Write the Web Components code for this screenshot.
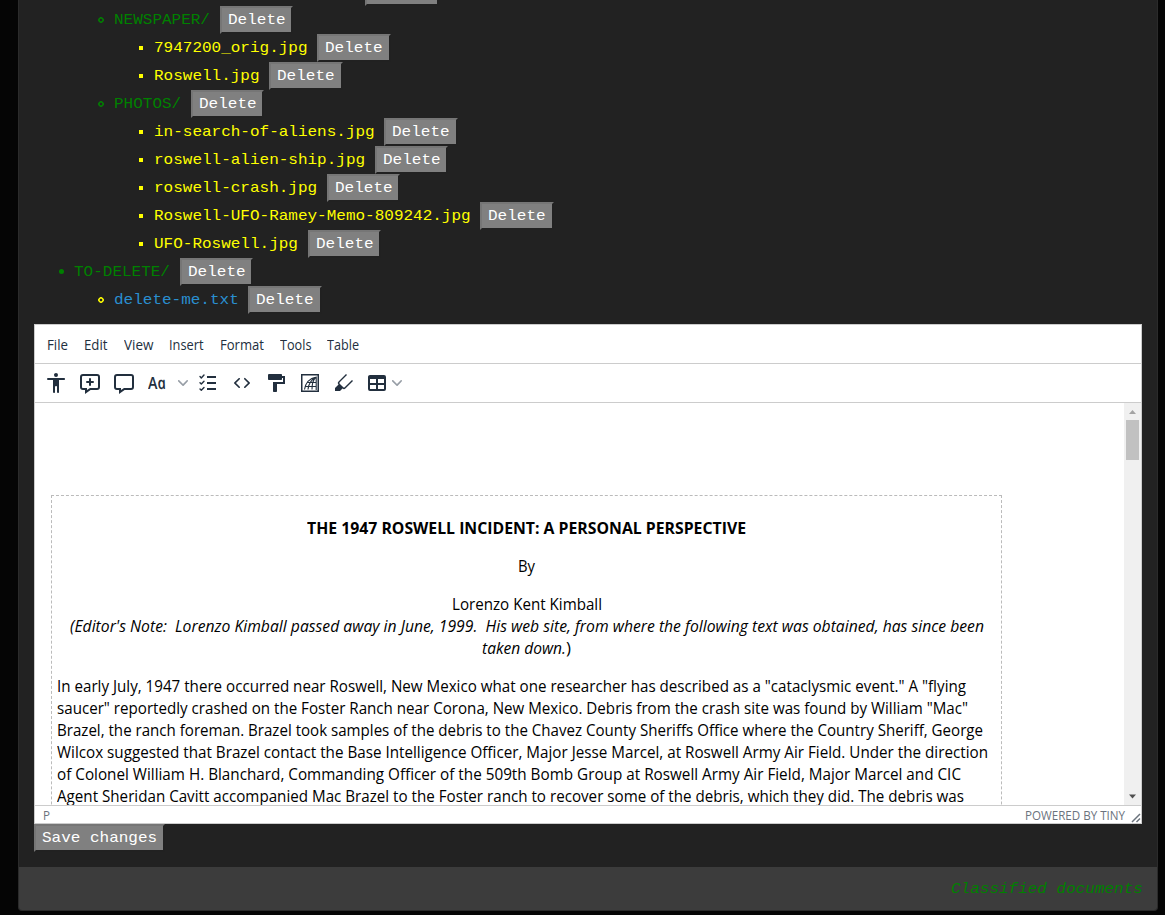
<!DOCTYPE html>
<html lang="en">
<head>
<meta charset="utf-8">
<title>Classified documents</title>
<style>
html{background:#050505}
body{margin:0;height:915px;overflow:hidden;background:#050505;font:16px/22px "Liberation Mono","Courier New",monospace}
</style>
</head>
<body>
<admin-page></admin-page>
<script>
const define = (name, html, init) => customElements.define(name, class extends HTMLElement {
  constructor() {
    super();
    this.attachShadow({ mode: 'open' }).innerHTML = html;
  }
  connectedCallback() { if (init) init.call(this, this.shadowRoot); }
});

/* One line of text, condensed so that it fills the width given in "w". */
define('fit-text', `<style>:host{display:inline-block;white-space:pre;vertical-align:top;text-align:left}span{display:inline-block;transform-origin:0 50%}</style><span><slot></slot></span>`,
function (root) {
  const w = parseFloat(this.getAttribute('w'));
  const span = root.querySelector('span');
  const natural = span.offsetWidth && span.getBoundingClientRect().width;
  if (natural) span.style.transform = 'scaleX(' + (w / natural) + ')';
  this.style.width = w + 'px';
});

/* Typewriter text: low letters on a wide 9.6px pitch. */
define('mono-text', `<style>
:host{display:inline-block;white-space:pre;vertical-align:top;text-align:left;font-size:14.4px}
span{display:inline-block;transform:scaleX(1.1111);transform-origin:0 50%}
</style><span><slot></slot></span>`,
function (root) {
  const span = root.querySelector('span');
  this.style.width = span.getBoundingClientRect().width + 'px';
});

define('bevel-button', `<style>
:host{display:inline-block;vertical-align:top}
button{display:block;box-sizing:border-box;height:28px;margin:0;padding:0 6px;border:2px solid;border-color:#767676 #212121 #212121 #767676;background:#808080;color:#fff;font:16px/23px "Liberation Mono","Courier New",monospace;white-space:pre}
</style><button><mono-text><slot></slot></mono-text></button>`);

define('file-row', `<style>
:host{display:flex;height:28px;color:#ff0}
:host([kind=dir]){color:green}
.lead{display:flex;align-items:center;justify-content:flex-end;flex:none;box-sizing:border-box;padding-right:10px;width:80px}
:host([level="1"]) .lead{width:40px}
:host([level="3"]) .lead{width:120px;padding-right:11px}
:host([level="0"]) .lead{width:321.4px}
i{display:block;box-sizing:border-box;width:4px;height:4px;background:currentColor;margin-bottom:1px}
:host([level="1"]) i{width:5px;height:5px;border-radius:50%}
:host([level="2"]) i{width:6px;height:6px;background:radial-gradient(circle,transparent 1.1px,currentColor 1.7px 2.5px,transparent 3.1px)}
:host([level="0"]) i{display:none}
.name{line-height:28px;margin-right:9.6px}
:host([kind=text]) .name{color:#2a8fd0}
</style><div class="lead"><i></i></div><mono-text class="name"><slot></slot></mono-text><bevel-button>Delete</bevel-button>`);

define('file-list', `<style>:host{display:block;margin-top:-22px;padding-left:34px}</style>
<file-row level="0"></file-row>
<file-row level="2" kind="dir">NEWSPAPER/</file-row>
<file-row level="3">7947200_orig.jpg</file-row>
<file-row level="3">Roswell.jpg</file-row>
<file-row level="2" kind="dir">PHOTOS/</file-row>
<file-row level="3">in-search-of-aliens.jpg</file-row>
<file-row level="3">roswell-alien-ship.jpg</file-row>
<file-row level="3">roswell-crash.jpg</file-row>
<file-row level="3">Roswell-UFO-Ramey-Memo-809242.jpg</file-row>
<file-row level="3">UFO-Roswell.jpg</file-row>
<file-row level="1" kind="dir">TO-DELETE/</file-row>
<file-row level="2" kind="text">delete-me.txt</file-row>`);

define('editor-menu', `<style>
:host{display:flex;gap:16px;box-sizing:border-box;height:39px;padding:0 12px;border-bottom:1px solid #ccc;font:13.6px/40px "Open Sans","Noto Sans",sans-serif;color:#222f3e}
</style><fit-text w="21">File</fit-text><fit-text w="23.5">Edit</fit-text><fit-text w="29.5">View</fit-text><fit-text w="34.5">Insert</fit-text><fit-text w="44">Format</fit-text><fit-text w="31.5">Tools</fit-text><fit-text w="32">Table</fit-text>`);

const icons = {
  access: '<path d="M12 2a2 2 0 0 1 2 2 2 2 0 0 1-2 2 2 2 0 0 1-2-2c0-1.1.9-2 2-2Zm8 7h-5v12c0 .6-.4 1-1 1a1 1 0 0 1-1-1v-5c0-.6-.4-1-1-1a1 1 0 0 0-1 1v5c0 .6-.4 1-1 1a1 1 0 0 1-1-1V9H4a1 1 0 1 1 0-2h16c.6 0 1 .4 1 1s-.4 1-1 1Z"/>',
  addcomment: '<path d="m9 19 3-2h7c.6 0 1-.4 1-1V6c0-.6-.4-1-1-1H5a1 1 0 0 0-1 1v10c0 .6.4 1 1 1h4v2Zm-2 4v-4H5a3 3 0 0 1-3-3V6a3 3 0 0 1 3-3h14a3 3 0 0 1 3 3v10a3 3 0 0 1-3 3h-6.4L7 23Z"/><path d="M13 10h2a1 1 0 0 1 0 2h-2v2a1 1 0 0 1-2 0v-2H9a1 1 0 0 1 0-2h2V8a1 1 0 0 1 2 0v2Z"/>',
  comment: '<path d="m9 19 3-2h7c.6 0 1-.4 1-1V6c0-.6-.4-1-1-1H5a1 1 0 0 0-1 1v10c0 .6.4 1 1 1h4v2Zm-2 4v-4H5a3 3 0 0 1-3-3V6a3 3 0 0 1 3-3h14a3 3 0 0 1 3 3v10a3 3 0 0 1-3 3h-6.4L7 23Z"/>',
  checklist: '<path fill="none" stroke="currentColor" stroke-width="2" d="M11 6h9M11 12h9M11 18h9"/><path fill="none" stroke="currentColor" stroke-width="1.4" stroke-linecap="round" stroke-linejoin="round" d="m4 5.6 1.3 1.3L8 4M4 11.8l1.3 1.3L8 10.2M4 18l1.3 1.3L8 16.4"/>',
  code: '<path d="M9.8 15.7c.3.3.3.8 0 1-.3.4-.9.4-1.2 0l-4.4-4.1a.8.8 0 0 1 0-1.2l4.4-4.2c.3-.3.9-.3 1.2 0 .3.3.3.8 0 1.1L6 12l3.8 3.7ZM14.2 15.7c-.3.3-.3.8 0 1 .4.4.9.4 1.2 0l4.4-4.1c.3-.3.3-.9 0-1.2l-4.4-4.2a.8.8 0 0 0-1.2 0c-.3.3-.3.8 0 1.1L18 12l-3.8 3.7Z"/>',
  painter: '<path d="M18 5V4c0-.5-.4-1-1-1H5a1 1 0 0 0-1 1v4c0 .6.5 1 1 1h12c.6 0 1-.4 1-1V7h1v4H9v9c0 .6.4 1 1 1h2c.6 0 1-.4 1-1v-7h8V5h-3Z"/>',
  net: '<g fill="none" stroke="currentColor"><rect x="3.75" y="3.75" width="16.5" height="16.5" stroke-width="1.5"/><path stroke-width="1.1" d="M6.5 18.5C7.5 12 11 7.5 18.3 6M10 18.5C10.500 13.500 12.500 9.500 17 6.500M14 18.500C14 13 15 9 17.500 6.500M18.200 5.500V19M9.500 11.500H18M7 15.500H18"/></g>',
  pen: '<path d="M10.5 17.5 8 20H3v-3l3.5-3.5a2 2 0 0 1 0-3L14 3l1 1-7.3 7.3a1 1 0 0 0 0 1.4l3.6 3.6c.4.4 1 .4 1.4 0L20 9l1 1-7.6 7.6a2 2 0 0 1-2.8 0l-.1-.1Z"/>',
  table: '<path fill-rule="evenodd" d="M19 4a2 2 0 0 1 2 2v12a2 2 0 0 1-2 2H5a2 2 0 0 1-2-2V6c0-1.1.9-2 2-2h14ZM5 14v4h6v-4H5Zm14 0h-6v4h6v-4Zm0-6h-6v4h6V8ZM5 12h6V8H5v4Z"/>'
};
define('tool-icon', `<style>:host{display:block;width:24px;height:24px;margin:0 5px;flex:none}svg{display:block}</style>`, function (root) {
  root.innerHTML += '<svg width="24" height="24" viewBox="0 0 24 24" fill="currentColor">' + icons[this.getAttribute('name')] + '</svg>';
});
define('tool-chevron', `<style>:host{display:block;width:10px;height:10px;color:#979ea6;flex:none}svg{display:block}</style>
<svg width="10" height="10" fill="currentColor"><path d="M8.7 2.2c.3-.3.8-.3 1 0 .4.4.4.9 0 1.2L5.7 7.8c-.3.3-.9.3-1.2 0L.2 3.4a.8.8 0 0 1 0-1.2c.3-.3.8-.3 1.1 0L5 6l3.7-3.8Z"/></svg>`);
define('case-icon', `<style>
:host{display:flex;width:18px;height:24px;margin:0 12px 0 7px;font:600 17px/24px "Open Sans","Noto Sans",sans-serif;flex:none}
span{display:block;flex:none;white-space:pre}
.cap{width:10px;transform:scaleX(.84);transform-origin:0 50%}
.low{font-style:italic;transform:skewX(12deg) scaleX(.84);transform-origin:0 65%}
</style><span class="cap">A</span><span class="low">a</span>`);

define('editor-tools', `<style>
:host{display:flex;align-items:center;box-sizing:border-box;height:39px;padding-left:4px;border-bottom:1px solid #ccc;color:#222f3e}
.gap{margin-right:3px}
</style>
<tool-icon name="access"></tool-icon><tool-icon name="addcomment"></tool-icon><tool-icon name="comment"></tool-icon>
<case-icon></case-icon><tool-chevron class="gap"></tool-chevron>
<tool-icon name="checklist"></tool-icon><tool-icon name="code"></tool-icon><tool-icon name="painter"></tool-icon><tool-icon name="net"></tool-icon><tool-icon name="pen"></tool-icon><tool-icon name="table" style="margin:0 3px 0 4px"></tool-icon><tool-chevron></tool-chevron>`);

define('scroll-bar', `<style>
:host{display:flex;flex-direction:column;align-items:center;width:17px;background:#f0f0f0;flex:none}
svg{display:block;flex:none}
div{width:13px;height:40px;background:#c1c1c1}
b{flex:1}
</style><svg width="17" height="17"><path fill="#a3a3a3" d="M5 11l3.5-4 3.5 4z"/></svg><div></div><b></b><svg width="17" height="17"><path fill="#505050" d="M5 6.5h7l-3.5 4z"/></svg>`);

define('article-body', `<style>
:host{display:block;flex:1;overflow:hidden;background:#fff;color:#000;font:15.6px/22px "Open Sans","Noto Sans",sans-serif}
section{box-sizing:border-box;width:951px;height:420px;margin:92px 0 0 16px;border:1px dashed #bbb;padding:21px 5px 0}
.c{text-align:center}
p{margin:0 0 16px}
p fit-text{display:block}
.c fit-text{display:inline-block}
</style>
<section>
<p class="c"><fit-text w="439" style="font-weight:700">THE 1947 ROSWELL INCIDENT: A PERSONAL PERSPECTIVE</fit-text></p>
<p class="c"><fit-text w="17">By</fit-text></p>
<p class="c"><fit-text w="150">Lorenzo Kent Kimball</fit-text><br><fit-text w="914" style="font-style:italic">(Editor's Note:&nbsp; Lorenzo Kimball passed away in June, 1999.&nbsp; His web site, from where the following text was obtained, has since been</fit-text><br><fit-text w="84" style="font-style:italic">taken down.</fit-text><fit-text w="5">)</fit-text></p>
<p><fit-text w="909">In early July, 1947 there occurred near Roswell, New Mexico what one researcher has described as a "cataclysmic event." A "flying</fit-text>
<fit-text w="911">saucer" reportedly crashed on the Foster Ranch near Corona, New Mexico. Debris from the crash site was found by William "Mac"</fit-text>
<fit-text w="926">Brazel, the ranch foreman. Brazel took samples of the debris to the Chavez County Sheriffs Office where the Country Sheriff, George</fit-text>
<fit-text w="931">Wilcox suggested that Brazel contact the Base Intelligence Officer, Major Jesse Marcel, at Roswell Army Air Field. Under the direction</fit-text>
<fit-text w="904">of Colonel William H. Blanchard, Commanding Officer of the 509th Bomb Group at Roswell Army Air Field, Major Marcel and CIC</fit-text>
<fit-text w="907">Agent Sheridan Cavitt accompanied Mac Brazel to the Foster ranch to recover some of the debris, which they did. The debris was</fit-text></p>
</section>`);

define('editor-status', `<style>
:host{display:flex;justify-content:space-between;box-sizing:border-box;height:18px;border-top:1px solid #ccc;padding:0 0 0 8px;font:12px/19px "Open Sans","Noto Sans",sans-serif;color:#6b737d}
div{display:flex;gap:6px}svg{display:block;margin-top:6px}
</style><fit-text w="7">P</fit-text><div><fit-text w="100">POWERED BY TINY</fit-text><svg width="10" height="11"><path d="M1 10 9 2M5.5 10 9 6.5" stroke="#6b737d" stroke-width="1.5" fill="none"/></svg></div>`);

define('rich-editor', `<style>
:host{display:flex;flex-direction:column;box-sizing:border-box;width:1108px;height:500px;margin:10px 0 0 15px;border:1px solid #ccc;background:#fff}
.view{display:flex;flex:1;min-height:0}
</style><editor-menu></editor-menu><editor-tools></editor-tools><div class="view"><article-body></article-body><scroll-bar></scroll-bar></div><editor-status></editor-status>`);

define('admin-page', `<style>
:host{display:block;height:915px;overflow:hidden}
main{box-sizing:border-box;display:flex;flex-direction:column;width:1140px;height:911px;margin-left:18px;border:1px solid #2b2b2b;border-top:0;border-radius:0 0 4px 4px;background:#222;overflow:hidden}
file-list{padding-left:15px}
.save{margin-left:15px}
footer{box-sizing:border-box;margin-top:auto;height:43px;padding-right:14px;background:#3c3c3c;color:green;text-align:right;font-style:italic;line-height:44px}
</style><main><file-list></file-list><rich-editor></rich-editor><bevel-button class="save">Save changes</bevel-button><footer><mono-text>Classified documents</mono-text></footer></main>`);
</script>
</body>
</html>
